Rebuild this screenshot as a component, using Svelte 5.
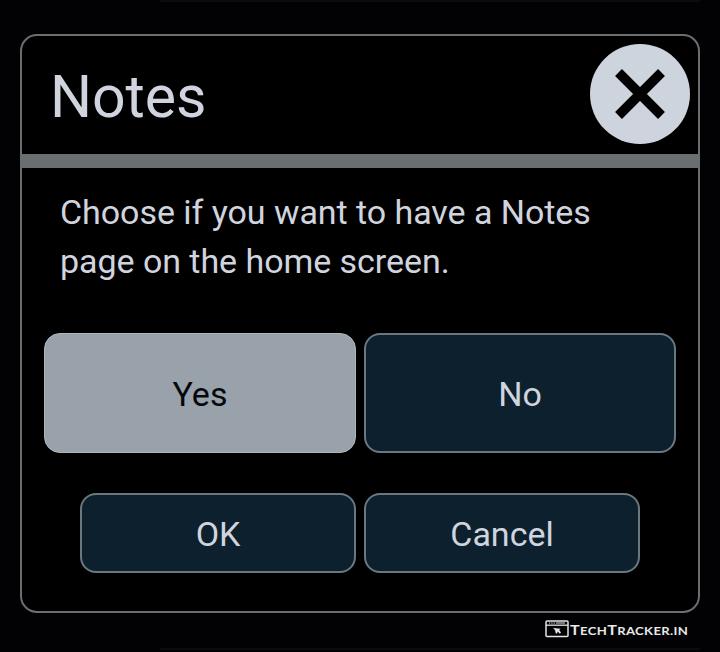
<script>
  let choice = $state('Yes');
</script>

<div class="screen">
  <section class="dialog">
    <header>
      <h1>Notes</h1>
      <button class="close" aria-label="Close">
        <svg viewBox="0 0 100 100" width="100" height="100">
          <path d="M28.5 28.5L71.5 71.5M71.5 28.5L28.5 71.5" stroke="#000" stroke-width="9.7" />
        </svg>
      </button>
    </header>
    <p>Choose if you want to have a Notes<br />page on the home screen.</p>
    <div class="row choices">
      {#each ['Yes', 'No'] as option}
        <button class="btn" class:selected={choice === option} onclick={() => (choice = option)}>{option}</button>
      {/each}
    </div>
    <div class="row actions">
      <button class="btn">OK</button>
      <button class="btn">Cancel</button>
    </div>
  </section>
  <footer>
    <svg viewBox="0 0 24 18" width="24" height="18" fill="none" stroke="#e4e4e4">
      <rect x="1" y="1" width="22" height="15.5" rx="1" stroke-width="1.5" />
      <path d="M1 5.2H23" stroke-width="1.3" />
      <path d="M4 3H10" stroke-width="1.2" stroke-dasharray="1.3 1" />
      <path d="M11 3H20" stroke-width="1" />
      <path d="M8 8L15.5 8.7L14.2 10L16 12.5L14.8 13.7L12.8 11.5L12 13.5L10.8 13.5L10 10Z" fill="#e4e4e4" stroke="none" />
    </svg>
    <span class="brand">T<small>ech</small>T<small>racker.in</small></span>
  </footer>
</div>

<style>
  :global(body) {
    margin: 0;
    background: #020206;
  }
  .screen {
    box-sizing: border-box;
    width: 720px;
    height: 652px;
    padding: 34px 20px 0;
    overflow: hidden;
    background:
      linear-gradient(#0c0c0f, #0c0c0f) 160px 0 / 540px 2px no-repeat,
      linear-gradient(#0c0c0f, #0c0c0f) 160px 648px / 540px 2px no-repeat,
      #020205;
    font-family: Roboto, sans-serif;
    color: #d0d4df;
  }
  .dialog {
    box-sizing: border-box;
    height: 579px;
    border: 2px solid #6c6d70;
    border-radius: 17px;
    background: #000;
  }
  header {
    display: flex;
    align-items: center;
    justify-content: space-between;
    box-sizing: border-box;
    height: 132px;
    margin: 0 -2px;
    padding: 0 10px 2px 30px;
    border-bottom: 14px solid #6b6e71;
  }
  h1 {
    margin: 6px 0 0;
    font-size: 59px;
    font-weight: 400;
    line-height: 70px;
    letter-spacing: -0.1px;
  }
  button {
    padding: 0;
    border: 0;
    font: inherit;
    color: inherit;
  }
  .close {
    width: 100px;
    height: 100px;
    border-radius: 50%;
    background: #ced4de;
  }
  .close svg {
    display: block;
  }
  p {
    height: 98px;
    margin: 20px 0 47px 38px;
    font-size: 34px;
    line-height: 49px;
    letter-spacing: -0.05px;
    white-space: nowrap;
  }
  .row {
    display: grid;
    grid-template-columns: 1fr 1fr;
    gap: 8px;
  }
  .choices {
    height: 120px;
    margin: 0 22px 40px;
  }
  .actions {
    height: 80px;
    margin: 0 58px;
  }
  .btn {
    box-sizing: border-box;
    padding-top: 2px;
    border: 2px solid #6b777f;
    border-radius: 16px;
    background: #0c212d;
    font-size: 34px;
  }
  .selected {
    border: 1px solid #adb7ba;
    background: #99a2ab;
    color: #04070c;
  }
  footer {
    display: flex;
    align-items: flex-start;
    gap: 1px;
    margin: 6px 0 0 525px;
    font-family: Lato, sans-serif;
    font-weight: 700;
    font-size: 13.5px;
    line-height: 20px;
    color: #e8e8e8;
    white-space: nowrap;
  }
  footer svg {
    flex: none;
    margin-top: 1px;
  }
  .brand {
    padding-top: 1px;
    letter-spacing: 0.3px;
    transform: scaleX(1.19);
    transform-origin: left;
  }
  small {
    font-size: 11px;
    text-transform: uppercase;
  }
</style>
